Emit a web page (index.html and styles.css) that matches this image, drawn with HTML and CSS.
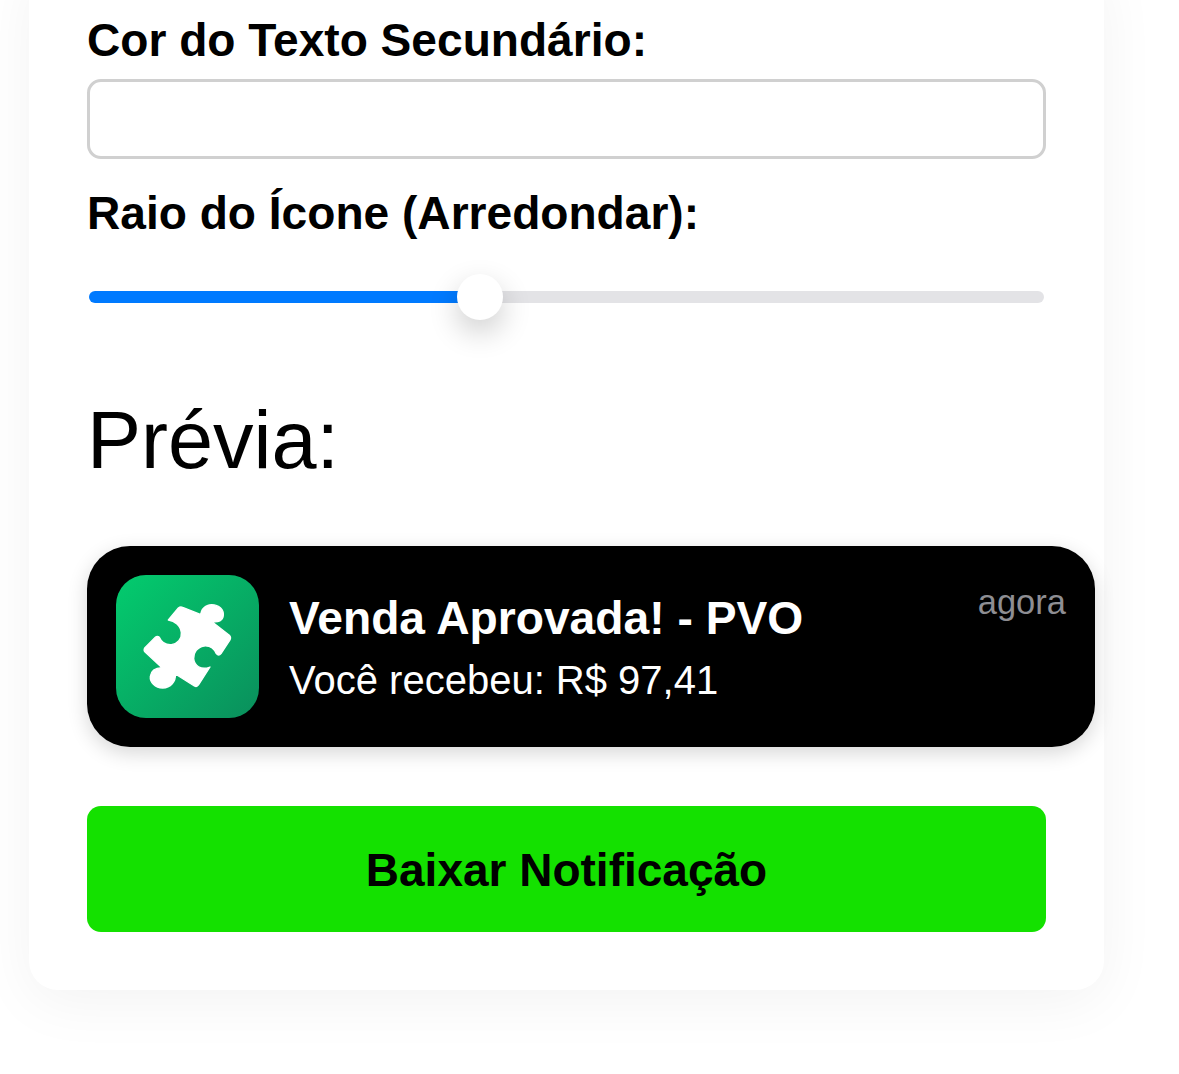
FILE: index.html
```html
<!DOCTYPE html>
<html lang="pt-BR">
<head>
  <meta charset="UTF-8">
  <title>Gerador de Notificação</title>
  <link rel="stylesheet" href="styles.css">
</head>
<body>

  <div class="card">
    <label class="field-label" for="secondaryColor">Cor do Texto Secundário:</label>
    <input class="text-input" type="text" id="secondaryColor">

    <label class="field-label field-label-next" for="iconRadius">Raio do Ícone (Arredondar):</label>
    <input class="radius-slider" type="range" id="iconRadius" min="0" max="100" value="40.5" step="0.5">

    <h2 class="preview-title">Prévia:</h2>

    <div class="notification">
      <div class="app-icon">
        <svg class="puzzle" viewBox="-72 -69 429 429" aria-hidden="true">
          <path d="M85 66 L115 30 Q121 25 128 28 L183 50 C182 35 195 21 215 20 C238 20 252 36 250 52 C249 68 235 74 216 71 L268 112 Q274 118 270 126 L243 167 Q236 175 229 167 C222 152 208 142 192 144 C172 147 160 164 161 182 C163 202 182 218 210 207 L176 260 Q171 268 163 264 L106 228 C108 250 92 270 68 270 C45 270 29 252 31 235 C33 218 46 210 66 209 L16 163 Q10 157 14 150 L46 118 Q52 112 58 118 C64 132 78 141 94 140 C112 138 126 122 124 104 C122 84 104 68 85 66 Z"/>
        </svg>
      </div>
      <div class="notification-text">
        <div class="notification-title">Venda Aprovada! - PVO</div>
        <div class="notification-body">Você recebeu: R$ 97,41</div>
      </div>
      <div class="notification-time">agora</div>
    </div>

    <button class="download-btn" type="button">Baixar Notificação</button>
  </div>

</body>
</html>
```

FILE: styles.css
```css
html, body {
  height: 1074px;
  overflow: hidden;
}

body {
  margin: 0;
  background-color: #fff;
  color: #000;
  font-family: "Liberation Sans", Arial, sans-serif;
}

.card {
  box-sizing: border-box;
  width: 1075px;
  margin: -40px 0 0 29px;
  padding: 54px 58px 58px;
  background-color: #fff;
  border-radius: 29px;
  box-shadow: 0 12px 58px rgba(0, 0, 0, 0.05);
}

.field-label {
  display: block;
  margin-bottom: 13px;
  font-size: 46.1px;
  font-weight: bold;
  line-height: 52px;
}

.field-label-next {
  margin-top: 28px;
  margin-bottom: 35px;
}

.text-input {
  display: block;
  box-sizing: border-box;
  width: 959px;
  height: 80px;
  margin: 0;
  background-color: #fff;
  border: 3px solid #d0d0d0;
  border-radius: 14px;
}

.radius-slider {
  display: block;
  width: 955px;
  height: 46px;
  margin: 0 0 0 2px;
  background: transparent;
  -webkit-appearance: none;
  appearance: none;
}

.radius-slider::-webkit-slider-runnable-track {
  height: 12px;
  border-radius: 6px;
  background: linear-gradient(to right, #007aff 0, #007aff 39%, #e3e3e6 39%, #e3e3e6 100%);
}

.radius-slider::-webkit-slider-thumb {
  -webkit-appearance: none;
  width: 46px;
  height: 46px;
  margin-top: -17px;
  background-color: #fff;
  border-radius: 50%;
  box-shadow: 0 12px 30px rgba(0, 0, 0, 0.2);
}

.preview-title {
  margin: 75px 0 61px;
  font-size: 81px;
  font-weight: normal;
  line-height: 90px;
}

.notification {
  display: flex;
  box-sizing: border-box;
  width: 1008px;
  height: 201px;
  padding: 29px;
  background-color: #000;
  color: #fff;
  border-radius: 43px;
  box-shadow: 0 6px 20px rgba(0, 0, 0, 0.16);
}

.app-icon {
  flex: 0 0 143px;
  height: 143px;
  margin-right: 30px;
  background: linear-gradient(135deg, #03cc6e, #0a8f5c);
  border-radius: 30px;
}

.puzzle {
  display: block;
  width: 143px;
  height: 143px;
}

.puzzle path {
  fill: #fff;
  stroke: #fff;
  stroke-width: 4;
  stroke-linejoin: round;
}

.notification-text {
  flex: 1;
}

.notification-title {
  margin-top: 15px;
  font-size: 46.2px;
  font-weight: bold;
  line-height: 56px;
}

.notification-body {
  margin-top: 10px;
  font-size: 40px;
  line-height: 48px;
}

.notification-time {
  margin-top: 0;
  color: #8e8e93;
  font-size: 34.5px;
  line-height: 54px;
}

.download-btn {
  display: block;
  width: 959px;
  height: 126px;
  margin: 59px 0 0;
  padding: 2px 0 0;
  background-color: #14e100;
  color: #000;
  border: 0;
  border-radius: 14px;
  font-family: inherit;
  font-size: 46px;
  font-weight: bold;
}
```
